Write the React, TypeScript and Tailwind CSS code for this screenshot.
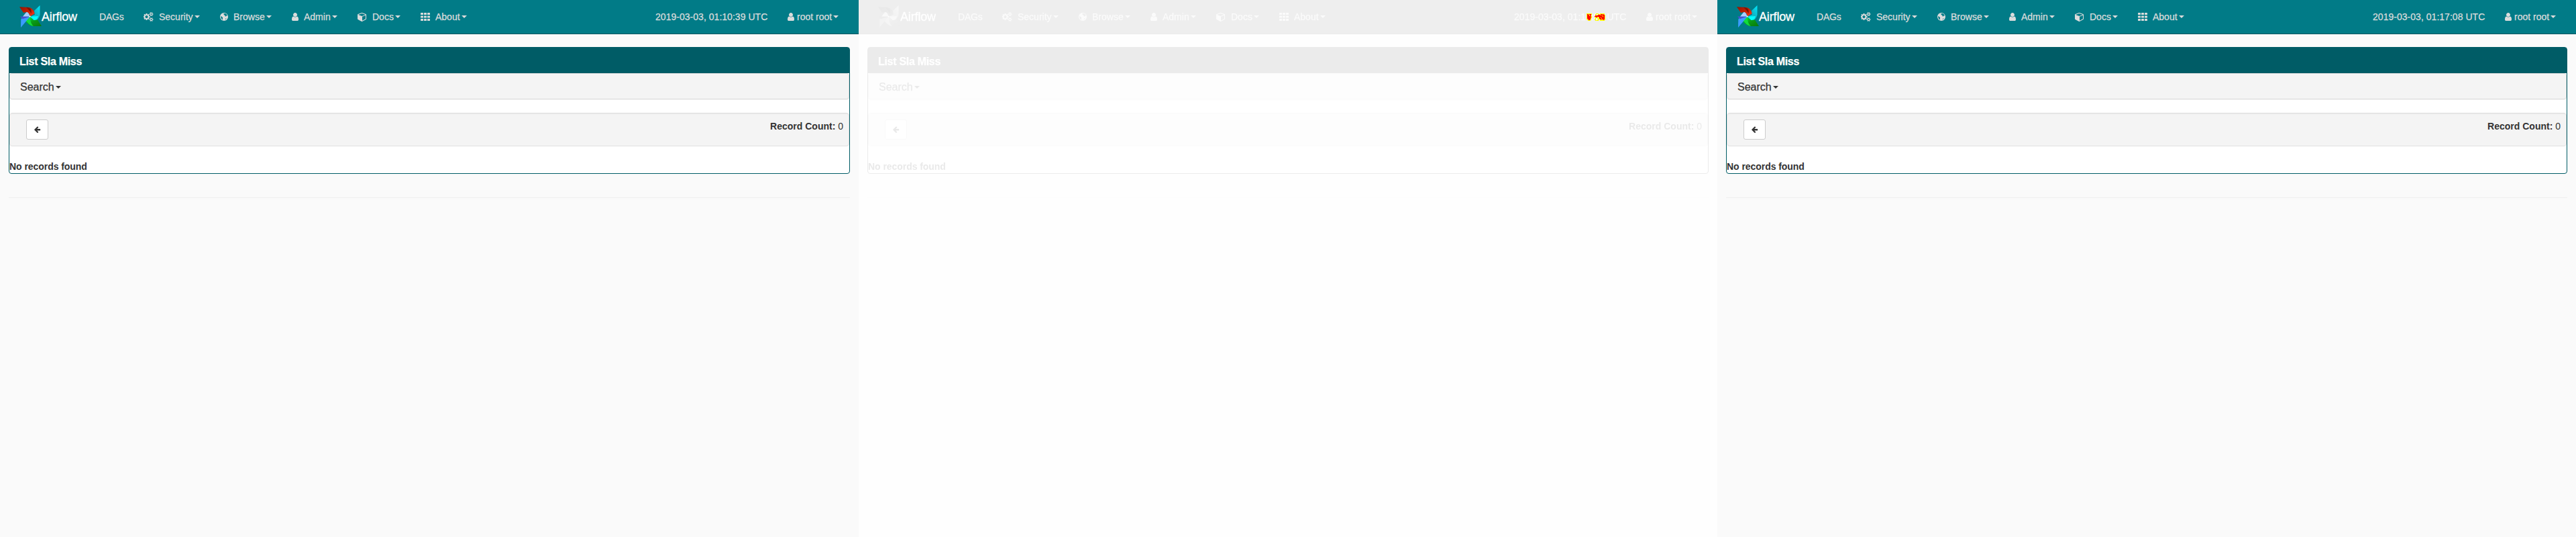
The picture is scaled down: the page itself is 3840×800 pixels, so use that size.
import React from "react";

const PATHS = {
  user: "M1536 1399q0 109-62.5 187t-150.5 78h-854q-88 0-150.5-78t-62.5-187q0-85 8.5-160.5t31.5-152 58.5-131 94-89 134.5-34.5q131 128 313 128t313-128q76 0 134.5 34.5t94 89 58.5 131 31.5 152 8.5 160.5zm-256-887q0 159-112.5 271.5t-271.5 112.5-271.5-112.5-112.5-271.5 112.5-271.5 271.5-112.5 271.5 112.5 112.5 271.5z",
  cogs: "M832 896q0-106-75-181t-181-75-181 75-75 181 75 181 181 75 181-75 75-181zm768 512q0-52-38-90t-90-38-90 38-38 90q0 53 37.5 90.5t90.5 37.5 90.5-37.5 37.5-90.5zm0-1024q0-52-38-90t-90-38-90 38-38 90q0 53 37.5 90.5t90.5 37.5 90.5-37.5 37.5-90.5zm-384 421v185q0 10-7 19.5t-16 10.5l-155 24q-11 35-32 76 34 48 90 115 7 11 7 20 0 12-7 19-23 30-82.5 89.5t-78.5 59.5q-11 0-21-7l-115-90q-37 19-77 31-11 108-23 155-7 24-30 24h-186q-11 0-20-7.5t-10-17.5l-23-153q-34-10-75-31l-118 89q-7 7-20 7-11 0-21-8-144-133-144-160 0-9 7-19 10-14 41-53t47-61q-23-44-35-82l-152-24q-10-1-17-9.5t-7-19.5v-185q0-10 7-19.5t16-10.5l155-24q11-35 32-76-34-48-90-115-7-11-7-20 0-12 7-20 22-30 82-89t79-59q11 0 21 7l115 90q34-18 77-32 11-108 23-154 7-24 30-24h186q11 0 20 7.5t10 17.5l23 153q34 10 75 31l118-89q8-7 20-7 11 0 21 8 144 133 144 160 0 8-7 19-12 16-42 54t-45 60q23 48 34 82l152 23q10 2 17 10.5t7 19.5zm640 533v140q0 16-149 31-12 27-30 52 51 113 51 138 0 4-4 7-122 71-124 71-8 0-46-47t-52-68q-20 2-30 2t-30-2q-14 21-52 68t-46 47q-2 0-124-71-4-3-4-7 0-25 51-138-18-25-30-52-149-15-149-31v-140q0-16 149-31 13-29 30-52-51-113-51-138 0-4 4-7 4-2 35-20t59-34 30-16q8 0 46 46.5t52 67.5q20-2 30-2t30 2q51-71 92-112l6-2q4 0 124 70 4 3 4 7 0 25-51 138 17 23 30 52 149 15 149 31zm0-1024v140q0 16-149 31-12 27-30 52 51 113 51 138 0 4-4 7-122 71-124 71-8 0-46-47t-52-68q-20 2-30 2t-30-2q-14 21-52 68t-46 47q-2 0-124-71-4-3-4-7 0-25 51-138-18-25-30-52-149-15-149-31v-140q0-16 149-31 13-29 30-52-51-113-51-138 0-4 4-7 4-2 35-20t59-34 30-16q8 0 46 46.5t52 67.5q20-2 30-2t30 2q51-71 92-112l6-2q4 0 124 70 4 3 4 7 0 25-51 138 17 23 30 52 149 15 149 31z",
  cube: "M896 1629l640-349v-636l-640 233v752zm-64-865l698-254-698-254-698 254zm832-252v768q0 35-18 65t-49 47l-704 384q-28 16-61 16t-61-16l-704-384q-31-17-49-47t-18-65v-768q0-40 23-73t61-47l704-256q22-8 44-8t44 8l704 256q38 14 61 47t23 73z",
  arrow: "M1664 896v128q0 53-32.5 90.5t-84.5 37.5h-704l293 294q38 36 38 90t-38 90l-75 76q-37 37-90 37-52 0-91-37l-651-652q-37-37-37-90 0-52 37-91l651-650q38-38 91-38 52 0 90 38l75 74q38 38 38 91t-38 91l-293 293h704q52 0 84.5 37.5t32.5 90.5z",
};

function Cogs() {
  return <svg className="h-[14px] w-[15px] shrink-0" viewBox="0 0 1920 1792" fill="currentColor"><path d={PATHS.cogs} /></svg>;
}
function User() {
  return <svg className="h-[14px] w-[10px] shrink-0" viewBox="256 0 1280 1792" fill="currentColor"><path d={PATHS.user} /></svg>;
}
function Cube() {
  return <svg className="h-[14px] w-[14px] shrink-0" viewBox="0 0 1792 1792" fill="currentColor"><path d={PATHS.cube} /></svg>;
}
function Globe() {
  return (
    <svg className="h-[12px] w-[12px] shrink-0" viewBox="0 0 12 12">
      <circle cx="6" cy="6" r="6" fill="currentColor" />
      <path d="M5.200 1.200L8 1l2 1.400.9 1.900-1.300.3-1 .9-1.400-.5.5-1.200-1.300-.3-.8-.9zM1.100 5l1.500.8 1.600 1.400-.4 1.500.2 2-1.500-1.200-1.100-2z" fill="#017b87" />
      <path d="M8.200 8.700l1.300-.4-.6 1.200-1.200.8z" fill="#017b87" />
    </svg>
  );
}
function Grid() {
  return (
    <svg className="h-[12px] w-[14px] shrink-0" viewBox="0 0 14 12" fill="currentColor">
      {[0, 4.5, 9].map((y) => [0, 5, 10].map((x) => <rect key={`${x}-${y}`} x={x} y={y} width="4" height="3" rx=".6" />))}
    </svg>
  );
}
function Caret() {
  return <svg className="ml-[2px] h-[4px] w-[8px] shrink-0" viewBox="0 0 8 4" fill="currentColor"><path d="M0 0h8L4 4z" /></svg>;
}

function Pinwheel() {
  return (
    <svg className="h-[34px] w-[34px] shrink-0" viewBox="0 0 34 34">
      <defs>
        <linearGradient id="red" x1="0" y1="0" x2="1" y2="1"><stop offset="0" stopColor="#8f1500" /><stop offset=".5" stopColor="#c81e00" /><stop offset="1" stopColor="#ff3a20" /></linearGradient>
        <linearGradient id="cyan" x1="0" y1="1" x2="1" y2="0"><stop offset="0" stopColor="#0ff" /><stop offset=".5" stopColor="#10b4c4" /><stop offset="1" stopColor="#00e8ff" /></linearGradient>
        <linearGradient id="green" x1="0" y1="0" x2="1" y2="1"><stop offset="0" stopColor="#0f4" /><stop offset=".5" stopColor="#0a9a18" /><stop offset="1" stopColor="#087808" /></linearGradient>
      </defs>
      <path d="M1 2.300L15 3c3 .4 7 3 8 7l1 2-7.200 4.500c-.2-3.500-2.300-5.500-5.800-6.500L7 11z" fill="url(#red)" />
      <path d="M11 2.700c4 .3 6.500 1.500 7.500 4.500l.2 5-3-4.500z" fill="#7c1400" />
      <path d="M31.500 0v14c-1 5-4 8-7.500 8.500L17 17l7-3-1-6z" fill="url(#cyan)" />
      <path d="M17 17l12-1c-1 4-3 6-6 6.500z" fill="#0ff" />
      <path d="M16.800 17l5.200 5 6-.5 6 9.500H22c-6.500-.5-10-4.500-13-9.500z" fill="url(#green)" />
      <path d="M16.800 17c.2 5 1 10 5 14-4-.5-7-3-9-6L9 21.500z" fill="#12dc3c" />
      <path d="M3 33l.3-12 3-4.500 10.400.3-5 6z" fill="#3b9cff" />
      <path d="M2 16.500l14.500.2-11 3.500z" fill="#4a4fd0" />
      <path d="M6 16.500l5-6c1-1.200 3-.3 4 2l1.500 4z" fill="#a9ccff" />
      <circle cx="16.600" cy="16.500" r="1.100" fill="#fff" />
    </svg>
  );
}

type ItemProps = { icon?: React.ReactNode; label: string; gap?: string; width: string; textClass?: string; caret?: boolean };

function NavItem({ icon, label, gap = "gap-[8px]", width, textClass = "", caret = true }: ItemProps) {
  return (
    <div className={`flex h-[50px] shrink-0 items-center ${width} ${gap}`}>
      {icon}
      <span className="flex items-center">
        <span className={`whitespace-nowrap ${textClass}`}>{label}</span>
        {caret && <Caret />}
      </span>
    </div>
  );
}

function Navbar({ time }: { time: string }) {
  return (
    <nav className="flex h-[51px] items-center border-b border-[#005560] bg-[#017b87] px-[28px] text-[14px] leading-[20px] text-[#dcdcdc]">
      <div className="flex w-[120px] shrink-0 items-center text-[18px] text-white">
        <Pinwheel />
        <span className="tracking-[-0.15px] [-webkit-text-stroke:0.3px_white]">Airflow</span>
      </div>
      <NavItem label="DAGs" width="w-[66px]" textClass="tracking-[-0.2px]" caret={false} />
      <NavItem icon={<Cogs />} label="Security" width="w-[114px]" />
      <NavItem icon={<Globe />} label="Browse" width="w-[107px]" />
      <NavItem icon={<User />} label="Admin" width="w-[98px]" />
      <NavItem icon={<Cube />} label="Docs" width="w-[94px]" />
      <NavItem icon={<Grid />} label="About" width="w-[72px]" />
      <div className="ml-auto w-[197px] shrink-0 whitespace-nowrap tracking-[0.03px]">{time}</div>
      <NavItem icon={<User />} label="root root" gap="gap-[4px]" width="w-[78px]" />
    </nav>
  );
}

function Screen({ time, faded = false }: { time: string; faded?: boolean }) {
  return (
    <section className={`h-[800px] w-[1280px] shrink-0 bg-[#fafafa] text-[14px] leading-[20px] text-[#333] [-webkit-text-stroke:0.25px_currentColor] ${faded ? "opacity-10 grayscale" : ""}`}>
      <Navbar time={time} />
      <main className="px-[13px] pt-[19px]">
        <div className="h-[189px] rounded-[4px] border border-[#005c66] bg-white">
          <h4 className="flex h-[38px] items-center bg-[#005c66] px-[15px] pt-[3px] text-[16px] font-bold text-white">
            <span className="tracking-[-0.3px]">List Sla Miss</span>
          </h4>
          <div className="flex h-[39px] items-center rounded-[4px] border border-[#ddd] bg-[#f4f4f4] px-[15px] pt-[3px] text-[16px] shadow-[0_1px_1px_rgba(0,0,0,0.05)]">
            <span>Search</span><Caret />
          </div>
          <div className="mt-[20px] flex h-[50px] items-start justify-between rounded-[4px] border border-[#e0e0e0] bg-[#f4f4f4] pt-[9px] pr-[8px] pl-[24px] shadow-[inset_0_1px_1px_rgba(0,0,0,0.05)]">
            <button className="flex h-[30px] w-[33px] items-center justify-center rounded-[3px] border border-[#ccc] bg-white">
              <svg className="h-[11px] w-[11px]" viewBox="0 100 1792 1792" fill="currentColor"><path d={PATHS.arrow} /></svg>
            </button>
            <div className="[-webkit-text-stroke:0px]"><b>Record Count:</b> 0</div>
          </div>
          <div className="pt-[20px] font-bold tracking-[-0.05px] [-webkit-text-stroke:0px]">No records found</div>
        </div>
        <div className="mt-[35px] h-px bg-[#eee]" />
      </main>
    </section>
  );
}

const CHANGED = [
  "YYYYYYYY......YYYY..YYYYYYY.",
  "YRRYRRRY.....YY..YYYYRRRYRY.",
  "YRRRYRRY.....Y..YRRRRYRRRRRY",
  "YRRRYRY......RRRRRRRRRRYRRRY",
  "YRRRRRRY....RRRRRRRRRRRRYRRY",
  "YRRRRRYY....YYRRYYRRRRRRRRRY",
  "YRRRRRRY.....YYYY.YRRYRRRRRY",
  "YRRRRRY......Y..YYYRRRYRRRRY",
  "YYRRRRY.....YY...YYYRRRRRRRY",
  ".YYRRYY.....YY..YYY.YYYYYRYY",
  "..YYYY.......YYYYY..YYYYYYY.",
];

function ChangedPixels() {
  return (
    <svg className="absolute top-[20px] left-[1085px] h-[11px] w-[28px]" viewBox="0 0 28 11" shapeRendering="crispEdges">
      {CHANGED.map((row, y) =>
        row.split("").map((c, x) => (c === "." ? null : <rect key={`${x}-${y}`} x={x} y={y} width="1" height="1" fill={c === "R" ? "#f00" : "#ff0"} />)),
      )}
    </svg>
  );
}

export default function App() {
  return (
    <div className="flex h-[800px] w-[3840px] overflow-hidden bg-white font-['Liberation_Sans',Arial,sans-serif]">
      <Screen time="2019-03-03, 01:10:39 UTC" />
      <div className="relative shrink-0">
        <Screen time="2019-03-03, 01:10:39 UTC" faded />
        <ChangedPixels />
      </div>
      <Screen time="2019-03-03, 01:17:08 UTC" />
    </div>
  );
}
